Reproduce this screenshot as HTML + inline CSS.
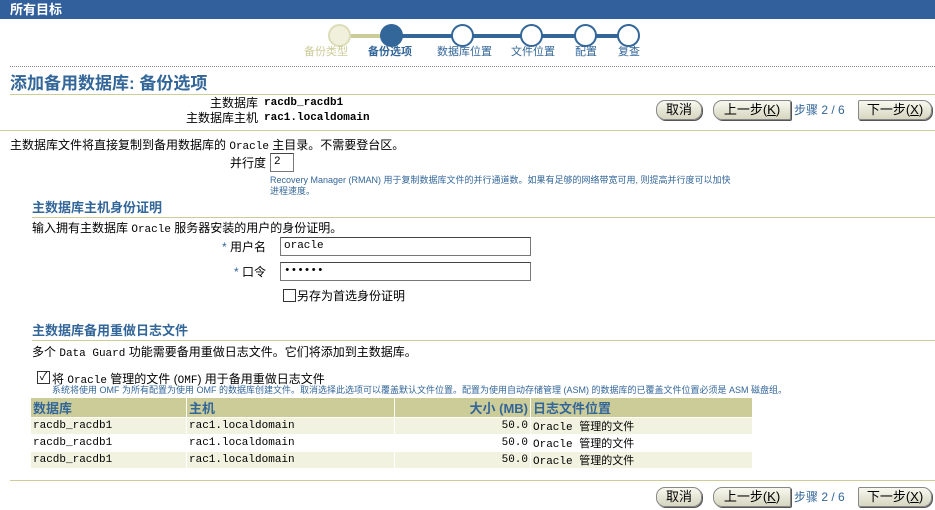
<!DOCTYPE html>
<html><head><meta charset="utf-8"><style>
body{margin:0;width:935px;height:510px;background:#fff;position:relative;overflow:hidden;font-family:"Liberation Sans","WenQuanYi Zen Hei","Noto Sans CJK SC",sans-serif;font-size:12px;color:#000}
.a{position:absolute;white-space:nowrap;line-height:14px}
.mono{font-family:"Liberation Mono","WenQuanYi Zen Hei",monospace;font-size:11px}
.blue{color:#336699}
.sm{font-size:9px;color:#336699;line-height:11px}
.btn{position:absolute;height:18px;border:1px solid #888;border-radius:9px;background:linear-gradient(#f8f8ef,#d6d6c0);font-size:13px;line-height:18px;text-align:center;box-shadow:1px 1px 0 #555}
.inp{position:absolute;border:1px solid #777;border-top-color:#444;height:17px;background:#fff;font-family:"Liberation Mono",monospace;font-size:11px;line-height:17px;padding-left:3px;box-sizing:border-box}
.hl{position:absolute;height:1px;background:#cccc99}
.circ{position:absolute;width:19px;height:19px;border-radius:50%;border:2px solid #336699;background:#fff}
td{border:1px solid #fff;padding:0 2px;height:15px;font-family:"Liberation Mono","WenQuanYi Zen Hei",monospace;font-size:11px}
table{border-collapse:collapse;position:absolute;left:30px;top:397px;width:723px;background:#f2f2e0}
th{background:#cccc99;color:#336699;text-align:left;font-size:13px;height:18px;padding:0 2px;border:1px solid #fff}
.cb{position:absolute;width:11px;height:11px;border:1px solid #333;background:#fff;font-size:11px;line-height:11px;text-align:center}
</style></head><body>
<div style="position:absolute;left:0;top:0;width:935px;height:19px;background:#31609c;color:#fff;font-weight:bold;font-size:13px;line-height:19px;padding-left:10px;box-sizing:border-box">所有目标</div>
<div style="position:absolute;left:340px;top:34px;width:52px;height:4px;background:#cccc99"></div>
<div style="position:absolute;left:392px;top:34px;width:237px;height:4px;background:#336699"></div>
<div class="circ" style="left:328px;top:24px;background:#f0f0dc;border-color:#dcdcb8"></div>
<div class="circ" style="left:380px;top:24px;background:#336699"></div>
<div class="circ" style="left:451px;top:24px"></div>
<div class="circ" style="left:520px;top:24px"></div>
<div class="circ" style="left:574px;top:24px"></div>
<div class="circ" style="left:617px;top:24px"></div>
<div class="a" style="left:304px;top:45px;font-size:11px;color:#cccc99">备份类型</div>
<div class="a" style="left:368px;top:45px;font-size:11px;color:#336699;font-weight:bold">备份选项</div>
<div class="a" style="left:437px;top:45px;font-size:11px;color:#336699">数据库位置</div>
<div class="a" style="left:511px;top:45px;font-size:11px;color:#336699">文件位置</div>
<div class="a" style="left:575px;top:45px;font-size:11px;color:#336699">配置</div>
<div class="a" style="left:618px;top:45px;font-size:11px;color:#336699">复查</div>
<div style="position:absolute;left:10px;top:66px;width:925px;border-top:1px dotted #888"></div>
<div class="a blue" style="left:10px;top:74px;font-size:17px;line-height:20px;font-weight:bold">添加备用数据库: 备份选项</div>
<div class="hl" style="left:10px;top:94px;width:925px"></div>
<div class="a" style="left:150px;top:96px;width:108px;text-align:right">主数据库</div>
<div class="a mono" style="left:264px;top:96px;font-weight:bold">racdb_racdb1</div>
<div class="a" style="left:150px;top:111px;width:108px;text-align:right">主数据库主机</div>
<div class="a mono" style="left:264px;top:111px;font-weight:bold">rac1.localdomain</div>
<div class="btn" style="left:656px;top:100px;width:44px">取消</div>
<div class="btn" style="left:713px;top:100px;width:76px;border-radius:9px 2px 2px 9px">上一步(<u>K</u>)</div>
<div class="a blue" style="left:794px;top:103px">步骤 2 / 6</div>
<div class="btn" style="left:858px;top:100px;width:72px;border-radius:2px 9px 9px 2px">下一步(<u>X</u>)</div>
<div class="hl" style="left:0;top:130px;width:935px"></div>
<div class="a" style="left:10px;top:138px">主数据库文件将直接复制到备用数据库的 <span class="mono">Oracle</span> 主目录。不需要登台区。</div>
<div class="a" style="left:200px;top:156px;width:66px;text-align:right">并行度</div>
<div class="inp" style="left:270px;top:153px;width:24px;height:19px">2</div>
<div class="a sm" style="left:270px;top:175px">Recovery Manager (RMAN) 用于复制数据库文件的并行通道数。如果有足够的网络带宽可用, 则提高并行度可以加快</div>
<div class="a sm" style="left:270px;top:186px">进程速度。</div>
<div class="a blue" style="left:32px;top:201px;font-weight:bold;font-size:13px">主数据库主机身份证明</div>
<div class="hl" style="left:32px;top:217px;width:903px"></div>
<div class="a" style="left:32px;top:221px">输入拥有主数据库 <span class="mono">Oracle</span> 服务器安装的用户的身份证明。</div>
<div class="a" style="left:190px;top:240px;width:76px;text-align:right"><span class="blue">*</span> 用户名</div>
<div class="inp" style="left:280px;top:237px;width:251px;height:19px">oracle</div>
<div class="a" style="left:190px;top:265px;width:76px;text-align:right"><span class="blue">*</span> 口令</div>
<div class="inp" style="left:280px;top:262px;width:251px;height:19px">••••••</div>
<div class="cb" style="left:283px;top:289px"></div>
<div class="a" style="left:297px;top:289px">另存为首选身份证明</div>
<div class="a blue" style="left:32px;top:324px;font-weight:bold;font-size:13px">主数据库备用重做日志文件</div>
<div class="hl" style="left:32px;top:340px;width:903px"></div>
<div class="a" style="left:32px;top:345px">多个 <span class="mono">Data Guard</span> 功能需要备用重做日志文件。它们将添加到主数据库。</div>
<div class="cb" style="left:37px;top:371px">✓</div>
<div class="a" style="left:52px;top:372px">将 <span class="mono">Oracle</span> 管理的文件 (<span class="mono">OMF</span>) 用于备用重做日志文件</div>
<div class="a sm" style="left:52px;top:385px">系统将使用 OMF 为所有配置为使用 OMF 的数据库创建文件。取消选择此选项可以覆盖默认文件位置。配置为使用自动存储管理 (ASM) 的数据库的已覆盖文件位置必须是 ASM 磁盘组。</div>
<table>
<tr><th style="width:151px">数据库</th><th style="width:203px">主机</th><th style="width:131px;text-align:right">大小 (MB)</th><th>日志文件位置</th></tr>
<tr><td>racdb_racdb1</td><td>rac1.localdomain</td><td style="text-align:right">50.0</td><td>Oracle 管理的文件</td></tr>
<tr style="background:#fff"><td>racdb_racdb1</td><td>rac1.localdomain</td><td style="text-align:right">50.0</td><td>Oracle 管理的文件</td></tr>
<tr><td>racdb_racdb1</td><td>rac1.localdomain</td><td style="text-align:right">50.0</td><td>Oracle 管理的文件</td></tr>
</table>
<div class="hl" style="left:10px;top:480px;width:925px"></div>
<div class="btn" style="left:656px;top:487px;width:44px">取消</div>
<div class="btn" style="left:713px;top:487px;width:76px;border-radius:9px 2px 2px 9px">上一步(<u>K</u>)</div>
<div class="a blue" style="left:794px;top:490px">步骤 2 / 6</div>
<div class="btn" style="left:858px;top:487px;width:72px;border-radius:2px 9px 9px 2px">下一步(<u>X</u>)</div>
</body></html>
